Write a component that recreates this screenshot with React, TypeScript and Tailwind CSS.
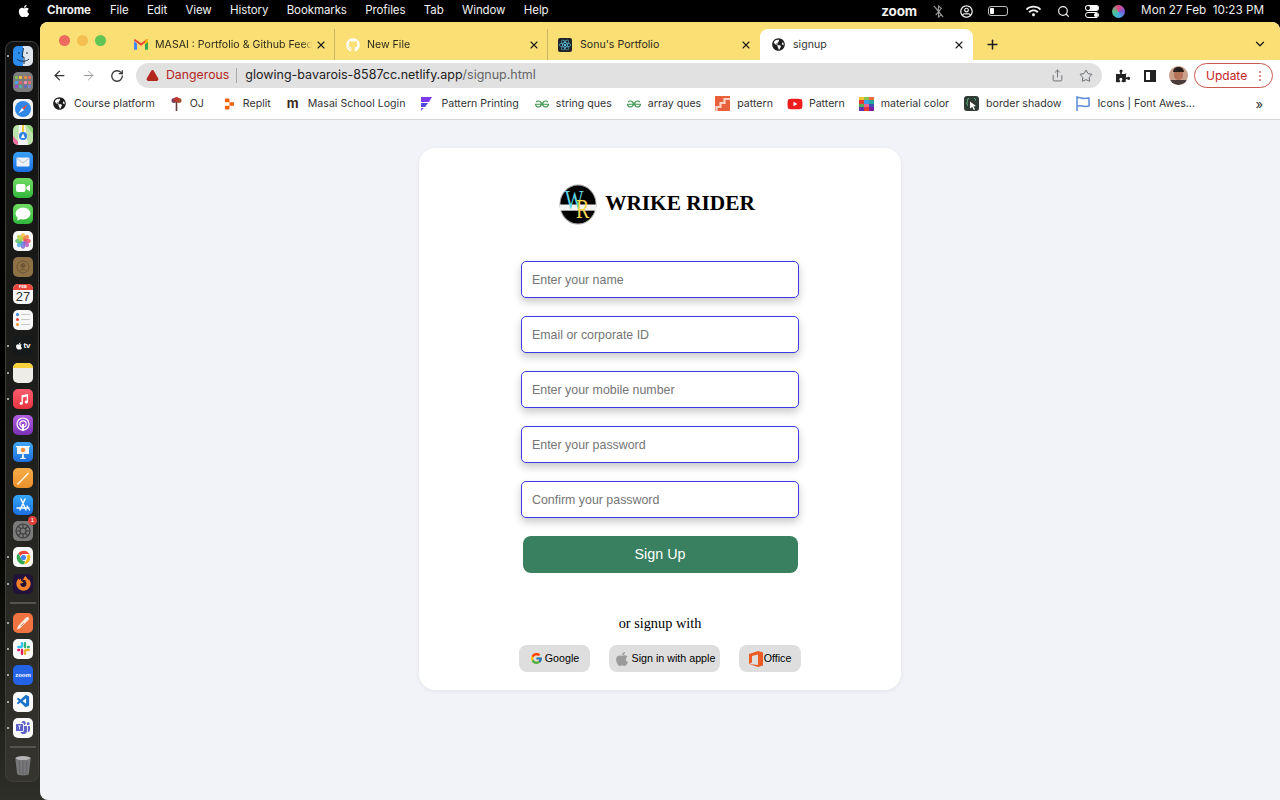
import { ArrowLeft, ArrowRight, ChevronDown, Plus, RotateCw, Search, Share, Star, TriangleAlert, X } from "lucide-react"
import type { ReactNode } from "react"
import { BsMicrosoftTeams } from "react-icons/bs"
import { FaApple, FaFirefoxBrowser, FaGithub, FaGlobeAmericas, FaPuzzlePiece, FaReact, FaWifi, FaYoutube, FaRegUserCircle } from "react-icons/fa"
import { FcGoogle } from "react-icons/fc"
import { SiGeeksforgeeks, SiReplit } from "react-icons/si"
import { VscVscode } from "react-icons/vsc"

const menus = ["File", "Edit", "View", "History", "Bookmarks", "Profiles", "Tab", "Window", "Help"]
const fields = ["Enter your name", "Email or corporate ID", "Enter your mobile number", "Enter your password", "Confirm your password"]

function Gmail() {
  return (
    <svg viewBox="0 0 16 12" className="w-[14px] h-[11px]">
      <path d="M0 2v9a1 1 0 0 0 1 1h2.500V5z" fill="#4285f4" />
      <path d="M12.500 5v7H15a1 1 0 0 0 1-1V2z" fill="#34a853" />
      <path d="M0 1.500 8 7.500l8-6V1c0-1-1.200-1.300-2-.8L8 4.600 2 .2C1.200-.3 0 0 0 1z" fill="#ea4335" />
      <path d="M12.500 2.600V6L16 3.400V1c0-1-1.200-1.300-2-.8z" fill="#fbbc04" />
    </svg>
  )
}

function Mosaic() {
  const colors = ["#f4c430", "#8bc34a", "#ef6c3a", "#e53935", "#3f9ae8", "#26a69a", "#4caf50", "#f06292", "#3f51b5", "#5e35b1", "#e53935", "#7b1fa2"]
  return (
    <div className="grid grid-cols-3 w-[15px] h-[14px] shrink-0">
      {colors.map((c, i) => (
        <div key={i} className="w-[5px] h-[3.5px]" style={{ backgroundColor: c }} />
      ))}
    </div>
  )
}

function Mark({ children }: { children: ReactNode }) {
  return <span className="inline-flex items-center justify-center shrink-0">{children}</span>
}

const bookmarks: { label: string; icon: ReactNode; spacing: string }[] = [
  { label: "Course platform", spacing: "gap-[8px] mr-[2px]", icon: <FaGlobeAmericas className="w-[13px] h-[13px] text-[#1e1e1e]" /> },
  {
    label: "OJ",
    spacing: "gap-[8px] mr-[6px]",
    icon: (
      <svg viewBox="0 0 11 14" className="w-[11px] h-[14px]">
        <circle cx="3" cy="3.500" r="2.500" fill="#7b3f61" />
        <circle cx="8" cy="3.500" r="2.500" fill="#a0522d" />
        <circle cx="5.500" cy="2.500" r="2.500" fill="#c0392b" />
        <rect x="4.700" y="5" width="1.600" height="9" fill="#5d4037" />
      </svg>
    ),
  },
  { label: "Replit", spacing: "gap-[8px] mr-[2px]", icon: <SiReplit className="w-[11px] h-[12px] text-[#f26207]" /> },
  { label: "Masai School Login", spacing: "gap-[10px] mr-[1px]", icon: <span className="w-[11px] text-[13px] leading-none font-bold text-[#3c2a21]">m</span> },
  {
    label: "Pattern Printing",
    spacing: "gap-[9px] mr-[2px]",
    icon: (
      <svg viewBox="0 0 12 14" className="w-[12px] h-[14px]">
        <path d="M1 0h11L9 5H1z" fill="#7c3aed" />
        <path d="M1 6h7L5 10H1z" fill="#4f46e5" />
        <path d="M1 11h3L1 14z" fill="#8b5cf6" />
      </svg>
    ),
  },
  { label: "string ques", spacing: "gap-[7px] mr-[1px]", icon: <SiGeeksforgeeks className="w-[14px] h-[14px] text-[#3f9a53]" /> },
  { label: "array ques", spacing: "gap-[7px]", icon: <SiGeeksforgeeks className="w-[14px] h-[14px] text-[#3f9a53]" /> },
  {
    label: "pattern",
    spacing: "gap-[7px]",
    icon: (
      <svg viewBox="0 0 15 15" className="w-[15px] h-[15px]">
        <rect width="15" height="15" fill="#e8613c" />
        <path d="M1.500 15v-4h4V7h4V3H15" fill="none" stroke="#fbd4c6" strokeWidth="2.200" />
      </svg>
    ),
  },
  { label: "Pattern", spacing: "gap-[6px]", icon: <FaYoutube className="w-[16px] h-[14px] text-[#ee1d1d]" /> },
  { label: "material color", spacing: "gap-[7px] mr-[1px]", icon: <Mosaic /> },
  {
    label: "border shadow",
    spacing: "gap-[7px] mr-[1px]",
    icon: (
      <span className="w-[15px] h-[15px] rounded-[3px] bg-[#2f3b35] flex items-center justify-center">
        <svg viewBox="0 0 15 15" className="w-[15px] h-[15px]">
          <path d="M5 2.500c-1.500 0-1.500 1-1.500 2s0 2-1 2.500c1 .5 1 1.500 1 2.500M10 2.500c1.500 0 1.500 1 1.500 2" fill="none" stroke="#6fcf97" strokeWidth=".9" />
          <path d="M6 5.500 12 10l-2.500.4L11 13.500l-1.200.6-1.500-3L6 12.500z" fill="#fff" />
        </svg>
      </span>
    ),
  },
  {
    label: "Icons | Font Awes...",
    spacing: "gap-[7px]",
    icon: (
      <svg viewBox="0 0 14 15" className="w-[14px] h-[15px]" fill="none" stroke="#5b8dd9" strokeWidth="1.500">
        <path d="M1 0v15" />
        <path d="M1 2c3-1.500 5 1 8 .5 1.500-.2 3-.5 4-.5v8c-3 .8-5 .5-7 0-2-.5-3.500-.2-5 .3" />
      </svg>
    ),
  },
]

function Tile({ className, children }: { className: string; children?: ReactNode }) {
  return <div className={`relative w-5 h-5 rounded-[5px] overflow-hidden flex items-center justify-center shrink-0 ${className}`}>{children}</div>
}

function DockItem({ dot, children }: { dot?: boolean; children: ReactNode }) {
  return (
    <div className="relative flex justify-center">
      {dot && <span className="absolute left-[-6px] top-[9px] w-[2px] h-[2px] rounded-full bg-[#cfcfcf]" />}
      {children}
    </div>
  )
}

function Dock() {
  return (
    <div className="w-[34px] h-[741px] mt-[19px] ml-[5px] pl-[2px] rounded-[8px] border border-[#3f3e3a] bg-gradient-to-b from-[#131313] via-[#1d1d1b] to-[#35342e] flex flex-col items-center pt-[4px] gap-[6.4px]">
      <DockItem dot>
        <Tile className="bg-gradient-to-r from-[#2b8df0] from-50% to-[#dfe6ee] to-50%">
          <svg viewBox="0 0 20 20" className="w-5 h-5" fill="none" stroke="#18324e" strokeWidth="1">
            <path d="M10.500 2 9 11h2v7" />
            <path d="M4 13c3 3 9 3 12 0" />
            <path d="M6 6v2M14 6v2" />
          </svg>
        </Tile>
      </DockItem>
      <DockItem>
        <Tile className="bg-[#7d7d7d]">
          <div className="grid grid-cols-4 gap-[1.5px]">
            {["#7ac14d", "#f4c542", "#ef8f3c", "#ec6a5e", "#42a5f5", "#e35d6a", "#f48fb1", "#e57373", "#9c4dcc", "#4db6ac", "#5c6bc0", "#7986cb"].map((c) => (
              <span key={c} className="w-[3px] h-[3px] rounded-[1px]" style={{ backgroundColor: c }} />
            ))}
          </div>
        </Tile>
      </DockItem>
      <DockItem>
        <Tile className="bg-[#f2f2f2]">
          <svg viewBox="0 0 20 20" className="w-5 h-5">
            <circle cx="10" cy="10" r="8" fill="#2f86e6" />
            <path d="M14.500 5.500 11 11 9 9z" fill="#ef4b3c" />
            <path d="M5.500 14.500 9 9 11 11z" fill="#fff" />
          </svg>
        </Tile>
      </DockItem>
      <DockItem>
        <Tile className="bg-[#bfe3ac]">
          <svg viewBox="0 0 20 20" className="w-5 h-5">
            <path d="M0 11 8 20H0z" fill="#ef6fa5" />
            <path d="M13 0h7v9z" fill="#8fd27a" />
            <path d="M6 0h6l3 20H5z" fill="#f5f5f5" />
            <path d="M9 0h2v8H9z" fill="#f3c93f" />
            <circle cx="10" cy="11" r="4" fill="#2f7fe6" />
            <path d="M10 8.500 12 13h-4z" fill="#fff" />
          </svg>
        </Tile>
      </DockItem>
      <DockItem>
        <Tile className="bg-gradient-to-b from-[#3aa0f5] to-[#1c6fe0]">
          <svg viewBox="0 0 20 20" className="w-5 h-5">
            <rect x="3.500" y="5.500" width="13" height="9" rx="1" fill="#eef2f6" />
            <path d="M3.500 6 10 11l6.500-5" fill="none" stroke="#a5b4c4" strokeWidth=".8" />
          </svg>
        </Tile>
      </DockItem>
      <DockItem>
        <Tile className="bg-gradient-to-b from-[#6fdc62] to-[#2fb63c]">
          <svg viewBox="0 0 20 20" className="w-5 h-5">
            <rect x="3" y="6" width="9.500" height="8" rx="2" fill="#fff" />
            <path d="M13.500 9 17 6.500v7L13.500 11z" fill="#fff" />
          </svg>
        </Tile>
      </DockItem>
      <DockItem>
        <Tile className="bg-gradient-to-b from-[#6fdc62] to-[#2fb63c]">
          <svg viewBox="0 0 20 20" className="w-5 h-5">
            <ellipse cx="10" cy="9.500" rx="7.500" ry="6" fill="#fff" />
            <path d="M5 13 4 16.500 8 15z" fill="#fff" />
          </svg>
        </Tile>
      </DockItem>
      <DockItem>
        <Tile className="bg-[#fafafa]">
          <svg viewBox="0 0 20 20" className="w-5 h-5">
            {["#f6b73c", "#ee7d3a", "#e5526b", "#b95bbd", "#7a6fd8", "#4fa6e0", "#5cc06c", "#b5d24a"].map((c, i) => (
              <ellipse key={c} cx="10" cy="5.800" rx="2.300" ry="3.600" fill={c} opacity=".85" transform={`rotate(${i * 45} 10 10)`} />
            ))}
          </svg>
        </Tile>
      </DockItem>
      <DockItem>
        <Tile className="bg-[#8f7146]">
          <svg viewBox="0 0 20 20" className="w-5 h-5" fill="none" stroke="#6f5634" strokeWidth="1">
            <circle cx="10" cy="10" r="6" />
            <circle cx="10" cy="8.500" r="2" fill="#6f5634" />
            <path d="M6.500 14.500c1-3 6-3 7 0" />
          </svg>
        </Tile>
      </DockItem>
      <DockItem>
        <div className="w-5 h-5 rounded-[5px] overflow-hidden bg-[#f6f6f6] flex flex-col items-center shrink-0">
          <div className="w-full h-[6px] bg-[#e9483f] text-white text-[4px] leading-[6px] text-center font-bold font-['Liberation_Sans',sans-serif]">FEB</div>
          <div className="text-[13px] leading-[14px] text-[#333] font-['Liberation_Sans',sans-serif]">27</div>
        </div>
      </DockItem>
      <DockItem>
        <Tile className="bg-[#f8f8f8]">
          <div className="flex flex-col gap-[2px]">
            {["bg-[#3f83f0]", "bg-[#e9483f]", "bg-[#ef9a2d]"].map((c) => (
              <div key={c} className="flex items-center gap-[2px]">
                <span className={`w-[3px] h-[3px] rounded-full ${c}`} />
                <span className="w-[9px] h-[1px] bg-[#c9c9c9]" />
              </div>
            ))}
          </div>
        </Tile>
      </DockItem>
      <DockItem dot>
        <Tile className="bg-[#161a1a] text-white text-[8px] font-bold font-['Liberation_Sans',sans-serif]">
          <FaApple className="w-[8px] h-[8px]" />
          tv
        </Tile>
      </DockItem>
      <DockItem dot>
        <div className="w-5 h-5 rounded-[5px] overflow-hidden bg-[#eeece6] shrink-0">
          <div className="h-[5px] bg-[#fbd23c]" />
        </div>
      </DockItem>
      <DockItem dot>
        <Tile className="bg-gradient-to-b from-[#fb5c6f] to-[#e5323f]">
          <svg viewBox="0 0 20 20" className="w-[13px] h-[13px]" fill="#fff">
            <path d="M7 3.500 17 1.500V14a2.500 2.200 0 1 1-2-2.200V5.500L9 6.800V16a2.500 2.200 0 1 1-2-2.200z" />
          </svg>
        </Tile>
      </DockItem>
      <DockItem>
        <Tile className="bg-gradient-to-b from-[#b45ee0] to-[#7b2fb5]">
          <svg viewBox="0 0 20 20" className="w-5 h-5" fill="none" stroke="#fff" strokeWidth="1.200">
            <circle cx="10" cy="9" r="6" />
            <circle cx="10" cy="9" r="3.200" />
            <path d="M10 9v7" strokeWidth="2.200" />
          </svg>
        </Tile>
      </DockItem>
      <DockItem>
        <Tile className="bg-gradient-to-b from-[#41a5f5] to-[#1e6fdc]">
          <svg viewBox="0 0 20 20" className="w-5 h-5">
            <rect x="4" y="5" width="12" height="7" fill="#f2f2f2" />
            <rect x="3" y="4" width="14" height="1.200" fill="#fff" />
            <circle cx="10" cy="8" r="2.200" fill="#ef8f3c" />
            <path d="M9.300 12h1.400l.6 4h1.500v1H7.200v-1h1.500z" fill="#e6eef6" />
          </svg>
        </Tile>
      </DockItem>
      <DockItem>
        <Tile className="bg-gradient-to-b from-[#f5ad47] to-[#ec8f2b]">
          <svg viewBox="0 0 20 20" className="w-5 h-5">
            <path d="M4 16 15 4.500l1 1L5 17z" fill="#fdf5e6" />
          </svg>
        </Tile>
      </DockItem>
      <DockItem>
        <Tile className="bg-gradient-to-b from-[#37a6f7] to-[#1b6fe0]">
          <svg viewBox="0 0 20 20" className="w-5 h-5" fill="none" stroke="#fff" strokeWidth="1.400" strokeLinecap="round">
            <path d="M7 15 12 4M13 15 8 4M4 13h12M14 11l2.500 4" />
          </svg>
        </Tile>
      </DockItem>
      <DockItem>
        <Tile className="bg-[#7b7b7b]">
          <svg viewBox="0 0 20 20" className="w-5 h-5" fill="none" stroke="#3e3e3e" strokeWidth="1.200">
            <circle cx="10" cy="10" r="7" />
            <circle cx="10" cy="10" r="3" />
            <path d="M10 3v4M10 13v4M3 10h4M13 10h4M5 5l3 3M12 12l3 3M15 5l-3 3M8 12l-3 3" />
          </svg>
        </Tile>
        <span className="absolute right-[-4px] top-[-5px] w-[9px] h-[9px] rounded-full bg-[#e0403a] text-white text-[6px] leading-[9px] text-center font-['Liberation_Sans',sans-serif]">1</span>
      </DockItem>
      <DockItem dot>
        <Tile className="bg-[#f8f8f8]">
          <svg viewBox="0 0 20 20" className="w-[17px] h-[17px]">
            <path d="M10 2a8 8 0 0 1 7 4H10a4 4 0 0 0-3.600 2.200L3.800 5A8 8 0 0 1 10 2z" fill="#e8453c" />
            <path d="M17 6a8 8 0 0 1-6.500 12l3-5.500A4 4 0 0 0 13.500 8z" fill="#f9bc15" />
            <path d="M3.800 5 7 10.800A4 4 0 0 0 12 13.800L10.500 18A8 8 0 0 1 3.800 5z" fill="#34a853" />
            <circle cx="10" cy="10" r="3" fill="#4285f4" />
          </svg>
        </Tile>
      </DockItem>
      <DockItem dot>
        <Tile className="bg-[#20123a]">
          <FaFirefoxBrowser className="w-[15px] h-[15px] text-[#f5822a]" />
        </Tile>
      </DockItem>
      <div className="w-[26px] h-[2px] my-[2px] bg-[#55544e] shrink-0" />
      <DockItem dot>
        <Tile className="bg-[#ef7441]">
          <svg viewBox="0 0 20 20" className="w-5 h-5">
            <path d="M4 16.500 5 13 12.500 5c1.500-1.500 3.500-1 3.500.5 0 1-.5 1.800-1.500 2.600L7 15.200z" fill="#fbe6dc" />
            <path d="M8 13l3-3" stroke="#ef7441" strokeWidth=".8" />
          </svg>
        </Tile>
      </DockItem>
      <DockItem dot>
        <Tile className="bg-[#fafafa]">
          <svg viewBox="0 0 20 20" className="w-[15px] h-[15px]" strokeWidth="3.200" strokeLinecap="round" fill="none">
            <path d="M8 3v4" stroke="#36c5f0" />
            <path d="M3 8h4" stroke="#36c5f0" />
            <path d="M12 3v5M17 8h-1" stroke="#2eb67d" />
            <path d="M12 17v-4M17 12h-4" stroke="#ecb22e" />
            <path d="M8 12v5M3 12h1" stroke="#e01e5a" />
          </svg>
        </Tile>
      </DockItem>
      <DockItem dot>
        <Tile className="bg-[#2463e6] text-white text-[6px] font-bold font-['Liberation_Sans',sans-serif]">zoom</Tile>
      </DockItem>
      <DockItem dot>
        <Tile className="bg-[#fafafa]">
          <VscVscode className="w-[15px] h-[15px] text-[#1a73c8]" />
        </Tile>
      </DockItem>
      <DockItem dot>
        <Tile className="bg-[#fafafa]">
          <BsMicrosoftTeams className="w-[14px] h-[14px] text-[#5b5fc7]" />
        </Tile>
      </DockItem>
      <div className="w-[26px] h-[2px] my-[1px] bg-[#55544e] shrink-0" />
      <svg viewBox="0 0 20 24" className="w-[18px] h-[22px] shrink-0">
        <ellipse cx="10" cy="3.500" rx="8.500" ry="2.500" fill="#b5b5b5" />
        <path d="M1.500 4 3.500 21c.2 2 12.800 2 13 0L18.500 4c-3 2-14 2-17 0z" fill="#77777a" />
        <path d="M6 7l.7 14M10 7v15M14 7l-.7 14" stroke="#5d5d60" strokeWidth=".8" />
      </svg>
    </div>
  )
}

function Tab({ icon, title, inset }: { icon: ReactNode; title: string; inset: string }) {
  return (
    <div className={`w-[213px] h-[31px] flex items-center pr-[6px] gap-[7px] border-r border-[#c9b463] text-[#2d2a1c] ${inset}`}>
      <Mark>{icon}</Mark>
      <span className="flex-1 min-w-0 whitespace-nowrap overflow-hidden [mask-image:linear-gradient(to_right,black_94%,transparent)]">{title}</span>
      <X className="w-[12px] h-[12px] ml-[-4px] mr-[1px] shrink-0 text-[#1d1d1d]" strokeWidth={2.2} />
    </div>
  )
}

export default function App() {
  return (
    <div className="w-[1280px] h-[800px] overflow-hidden flex flex-col bg-black font-['Inter',sans-serif]">
      <div className="h-[22px] shrink-0 flex items-center text-[#f2f2f2] text-[11.5px] tracking-[-0.1px]">
        <FaApple className="ml-[17px] w-[14px] h-[14px] text-white" />
        <span className="ml-[16px] mr-[19px] font-bold">Chrome</span>
        <div className="flex gap-[18.4px]">
          {menus.map((m) => (
            <span key={m}>{m}</span>
          ))}
        </div>
        <div className="ml-auto flex items-center">
          <span className="font-bold text-[13.5px] mr-[15px]">zoom</span>
          <svg viewBox="0 0 14 14" className="w-[13px] h-[13px] mr-[15px]" fill="none" stroke="#9a9a9a" strokeWidth="1.200">
            <path d="M4 3l6 7.500-3 2.500V1l3 2.500-6 7.500M2 1l10 12" />
          </svg>
          <FaRegUserCircle className="w-[13px] h-[13px] mr-[15px]" />
          <div className="relative w-[20px] h-[10px] rounded-[3px] border border-[#bdbdbd] mr-[18px] p-[1px]">
            <div className="w-[4px] h-full bg-white rounded-[1px]" />
          </div>
          <FaWifi className="w-[15px] h-[12px] mr-[16px]" />
          <Search className="w-[13px] h-[13px] mr-[15px]" strokeWidth={2.2} />
          <div className="flex flex-col gap-[1px] w-[14px] mr-[13px]">
            <div className="h-[6px] rounded-full bg-white flex justify-start p-[1px]">
              <span className="w-[4px] h-[4px] rounded-full bg-black" />
            </div>
            <div className="h-[6px] rounded-full border border-white flex justify-end">
              <span className="w-[4px] h-[4px] rounded-full bg-white" />
            </div>
          </div>
          <div className="w-[13px] h-[13px] rounded-full bg-[conic-gradient(#e8477e,#7a5ad8,#3fb4e0,#53c28b,#e8477e)] mr-[16px]" />
          <span className="text-[11.7px] tracking-normal text-[#ececec] mr-[16px] whitespace-pre">Mon 27 Feb  10:23 PM</span>
        </div>
      </div>

      <div className="flex-1 flex min-h-0 bg-gradient-to-b from-black from-50% to-[#2f2f2a]">
        <div className="w-[40px] shrink-0">
          <Dock />
        </div>

        <div className="flex-1 flex flex-col min-w-0 rounded-t-[8px] rounded-bl-[8px] overflow-hidden bg-[#f1f3f8]">
          <div className="h-[38px] shrink-0 bg-[#fadf75] flex items-end text-[10.6px]">
            <div className="w-[82px] h-full flex items-center pl-[19px] gap-[7px] pb-[1px]">
              <span className="w-[11px] h-[11px] rounded-full bg-[#ec6a5e]" />
              <span className="w-[11px] h-[11px] rounded-full bg-[#f4bf4f]" />
              <span className="w-[11px] h-[11px] rounded-full bg-[#61c554]" />
            </div>
            <Tab inset="pl-[12px]" icon={<Gmail />} title="MASAI : Portfolio & Github Feed" />
            <Tab inset="pl-[11px]" icon={<FaGithub className="w-[14px] h-[14px] text-white" />} title="New File" />
            <div className="w-[212px] h-[31px] flex items-center pl-[10px] pr-[8px] gap-[8px] text-[#2d2a1c]">
              <span className="w-[14px] h-[14px] rounded-[2px] bg-[#20232a] flex items-center justify-center">
                <FaReact className="w-[12px] h-[12px] text-[#61dafb]" />
              </span>
              <span className="flex-1">Sonu's Portfolio</span>
              <X className="w-[12px] h-[12px] shrink-0 text-[#1d1d1d]" strokeWidth={2.2} />
            </div>
            <div className="w-[213px] h-[31px] bg-white rounded-t-[8px] flex items-center pl-[12px] pr-[8px] gap-[8px] text-[#333]">
              <FaGlobeAmericas className="w-[13px] h-[13px] text-[#1e1e1e]" />
              <span className="flex-1">signup</span>
              <X className="w-[12px] h-[12px] shrink-0 text-[#1d1d1d]" strokeWidth={2.2} />
            </div>
            <Plus className="w-[15px] h-[15px] ml-[12px] mb-[8px] text-[#1d1d1d]" strokeWidth={2.4} />
            <ChevronDown className="w-[14px] h-[14px] ml-auto mr-[13px] mb-[9px] text-[#1d1d1d]" strokeWidth={2.2} />
          </div>

          <div className="h-[31px] shrink-0 bg-white flex items-center">
            <ArrowLeft className="ml-[12px] w-[15px] h-[15px] text-[#333]" strokeWidth={2} />
            <ArrowRight className="ml-[14px] w-[15px] h-[15px] text-[#9a9a9a]" strokeWidth={1.6} />
            <RotateCw className="ml-[13.5px] w-[14px] h-[14px] text-[#333]" strokeWidth={2.2} />
            <div className="ml-[12.5px] w-[966px] h-[25px] rounded-full bg-[#e1e1e1] flex items-center pl-[10px] pr-[9px] text-[12.5px]">
              <TriangleAlert className="w-[13px] h-[13px] text-[#b3261e] fill-[#b3261e] stroke-[#b3261e]" />
              <span className="ml-[7px] text-[12.3px] text-[#b3261e]">Dangerous</span>
              <span className="ml-[7px] mr-[8px] w-px h-[15px] bg-[#a8a8a8]" />
              <span className="text-[#222]">glowing-bavarois-8587cc.netlify.app</span>
              <span className="text-[#666]">/signup.html</span>
              <Share className="ml-auto w-[13px] h-[13px] text-[#5f6368]" strokeWidth={1.6} />
              <Star className="ml-[15px] w-[14px] h-[14px] text-[#5f6368]" strokeWidth={1.6} />
            </div>
            <FaPuzzlePiece className="ml-[14px] w-[14px] h-[14px] text-[#222]" />
            <div className="ml-[14px] w-[12px] h-[12px] border-2 border-[#222] flex justify-end">
              <div className="w-[4px] h-full bg-[#222]" />
            </div>
            <div className="ml-[13px] w-[19px] h-[19px] rounded-full overflow-hidden bg-[#c9a08c] relative">
              <div className="absolute left-[5px] top-[3px] w-[9px] h-[11px] rounded-full bg-[#b5735a]" />
              <div className="absolute left-[4px] top-[1px] w-[11px] h-[5px] rounded-t-full bg-[#2a1f1c]" />
              <div className="absolute left-0 bottom-0 w-full h-[5px] bg-[#4a3c3c]" />
            </div>
            <div className="ml-[6px] w-[79px] h-[25px] rounded-full border border-[#c9584f] flex items-center pl-[11px] text-[12px] text-[#c5221f]">
              Update
              <span className="ml-auto mr-[11px] flex flex-col gap-[2px]">
                <span className="w-[2px] h-[2px] rounded-full bg-[#d0675f]" />
                <span className="w-[2px] h-[2px] rounded-full bg-[#d0675f]" />
                <span className="w-[2px] h-[2px] rounded-full bg-[#d0675f]" />
              </span>
            </div>
          </div>

          <div className="h-[29px] shrink-0 pb-[2px] bg-white border-b border-[#d4d4d6] flex items-center pl-[13px] gap-[14px] text-[10.6px] text-[#333] whitespace-nowrap">
            {bookmarks.map((b) => (
              <div key={b.label} className={`flex items-center ${b.spacing}`}>
                <Mark>{b.icon}</Mark>
                <span>{b.label}</span>
              </div>
            ))}
            <span className="ml-auto mr-[17px] text-[13px] leading-none">»</span>
          </div>

          <div className="flex-1 flex justify-center pt-[28px]">
            <div className="w-[482px] h-[542px] bg-white rounded-[16px] shadow-[0_1px_4px_rgba(0,0,0,0.08)] flex flex-col items-center pt-[36px]">
              <div className="flex items-center gap-[8px] h-[40px] pr-[6px]">
                <svg viewBox="0 0 40 40" preserveAspectRatio="none" className="w-[38px] h-[41px]">
                  <circle cx="20" cy="20" r="19" fill="#000" stroke="#a8a8a8" strokeWidth="1" />
                  <rect x="1" y="20" width="38" height="6" fill="#f4f4f4" />
                  <text transform="translate(6 24) scale(1 1.3)" fontFamily="Liberation Serif" fontSize="21" fill="#5cd6e6">W</text>
                  <text transform="translate(18 33) scale(1 1.3)" fontFamily="Liberation Serif" fontSize="21" fill="#f5d64f">R</text>
                </svg>
                <span className="text-[21.3px] leading-none font-bold text-black font-['Liberation_Serif',serif]">WRIKE RIDER</span>
              </div>

              <div className="mt-[37px] flex flex-col gap-[18px] items-center font-['Liberation_Sans',sans-serif]">
                {fields.map((f) => (
                  <input
                    key={f}
                    placeholder={f}
                    className="w-[278px] h-[37px] px-[10px] rounded-[5px] border-[1.5px] border-[#3a3ae8] bg-white text-[12.4px] shadow-[0_4px_8px_rgba(0,0,0,0.22)] outline-none placeholder:text-[#757575]"
                  />
                ))}
                <button className="w-[275px] h-[37px] rounded-[8px] bg-[#38805f] text-white text-[14.3px]">Sign Up</button>
              </div>

              <p className="mt-[41px] text-[14.3px] leading-[18px] text-black font-['Liberation_Serif',serif]">or signup with</p>

              <div className="mt-[13px] flex gap-[19px] text-[10.7px] text-black font-['Liberation_Sans',sans-serif]">
                <div className="w-[71px] h-[27px] rounded-[8px] bg-[#dedede] flex items-center justify-center gap-[2px]">
                  <FcGoogle className="w-[13px] h-[13px]" />
                  Google
                </div>
                <div className="w-[111px] h-[27px] rounded-[8px] bg-[#dedede] flex items-center justify-center gap-[2px]">
                  <FaApple className="w-[16px] h-[16px] text-[#9b9b9b]" />
                  Sign in with apple
                </div>
                <div className="w-[62px] h-[27px] rounded-[8px] bg-[#dedede] flex items-center justify-center gap-[1px]">
                  <svg viewBox="0 0 14 16" className="w-[14px] h-[16px]">
                    <path d="M0 3 9 0l5 1.500v13L9 16 0 13l9 1V3.500L3 5v6.500L0 13z" fill="#eb5b25" />
                  </svg>
                  Office
                </div>
              </div>
            </div>
          </div>
        </div>
      </div>
    </div>
  )
}
